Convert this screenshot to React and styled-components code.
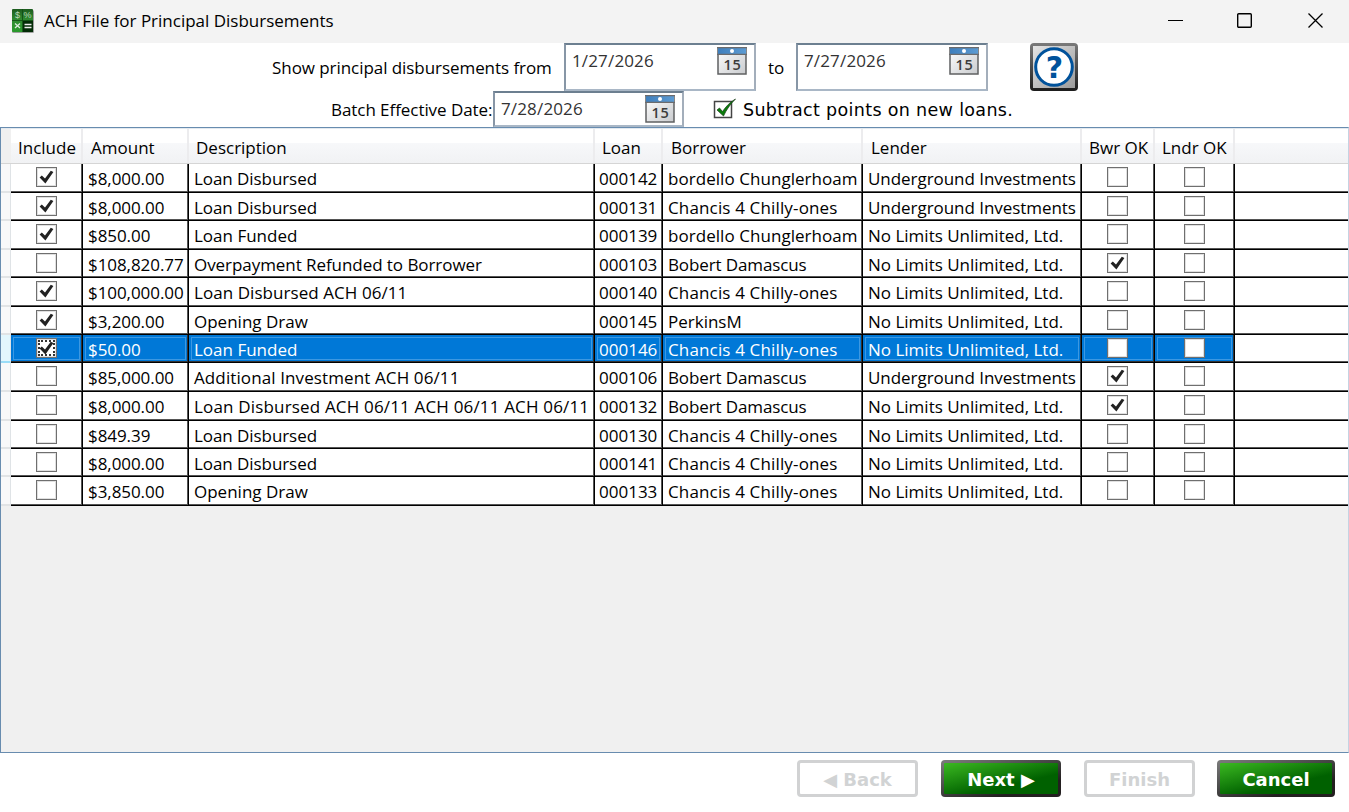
import styled, { createGlobalStyle, css } from "styled-components";

const GlobalStyle = createGlobalStyle`
  * {
    box-sizing: border-box;
  }
  body {
    margin: 0;
    background: #fff;
    color: #000;
    font-family: "Open Sans", "Noto Sans", sans-serif;
    font-size: 17px;
    overflow: hidden;
  }
  button {
    padding: 0;
  }
`;

const Window = styled.div`
  display: flex;
  flex-direction: column;
  width: 1349px;
  height: 812px;
  background: #fff;
`;

// title bar
const TitleBar = styled.header`
  display: flex;
  align-items: center;
  height: 43px;
  flex: none;
  padding: 0 25px 2px 11px;
  background: #f3f3f3;
`;

const Title = styled.h1`
  margin: 0 auto 0 10px;
  font-size: 17px;
  font-weight: 400;
  letter-spacing: -0.01px;
`;

const WindowButton = styled.button`
  display: flex;
  border: 0;
  background: none;
  margin-left: ${(props) => props.$gap || 0}px;
`;

// filters
const FilterRow = styled.div`
  display: flex;
  flex: none;
  height: ${(props) => props.$height}px;
  padding-left: ${(props) => props.$indent}px;
`;

const Label = styled.span`
  width: ${(props) => props.$width}px;
  padding-top: ${(props) => props.$top}px;
  padding-left: ${(props) => props.$left || 0}px;
  line-height: 24px;
  white-space: nowrap;
  letter-spacing: -0.06px;
`;

const DateBox = styled.div`
  display: flex;
  justify-content: space-between;
  width: ${(props) => props.$width}px;
  height: ${(props) => props.$height}px;
  padding: 2px 7px 0 6px;
  border: 2px solid;
  border-color: #6c7f90 #a3aebb #a9b7c6 #8796a6;
  background: #fff;
  color: #333;
  line-height: 27px;
  letter-spacing: 0.15px;
`;

const HelpButton = styled.button`
  display: flex;
  width: 48px;
  height: 48px;
  margin-left: 42px;
  border: 0;
  background: none;
`;

const PointsLabel = styled.span`
  margin-left: 6px;
  padding-top: 7px;
  font-family: "DejaVu Sans", sans-serif;
  font-size: 17.5px;
  line-height: 24px;
  letter-spacing: 0.33px;
`;

// grid
const GridArea = styled.main`
  flex: none;
  height: 626px;
  border: 1px solid #688caf;
  border-right-color: #c5d3e2;
  background: #f0f0f0;
`;

const columns = css`
  display: grid;
  grid-template-columns: 10px 72px 106px 406px 68px 200px 219px 73px 80px 1fr;
`;

const HeaderRow = styled.div`
  ${columns}
  height: 36px;
  border-top: 1px solid #e3e9ef;
  border-bottom: 1px solid #d5d5d5;
  background: linear-gradient(#fff 0 40%, #f7f8fa 41%, #f1f2f4);
`;

const HeaderCell = styled.div`
  padding: 7px 0 0 ${(props) => props.$pad || 7}px;
  border-right: 2px solid #ececee;
  line-height: 24px;
  white-space: nowrap;

  &:last-child {
    border-right: 0;
  }
`;

const HeaderCorner = styled.div`
  background: #f0f0f0;
`;

const Row = styled.div`
  ${columns}
  height: ${(props) => props.$height}px;
`;

const RowHeader = styled.div`
  border-right: 1px solid #dfe3e6;
  border-bottom: 2px solid ${(props) => (props.$selected ? "#9adcf7" : "#e1e3e5")};
  background: ${(props) => (props.$selected ? "#e3f6fd" : "#f8f8f9")};
`;

const Cell = styled.div`
  display: flex;
  align-items: center;
  justify-content: ${(props) => (props.$center ? "center" : "flex-start")};
  padding: 2px 1px 1px ${(props) => (props.$center ? 0 : props.$pad || 5)}px;
  border-right: 1px solid #000;
  border-bottom: 1px solid #000;
  background: #fff;
  box-shadow: inset -1px -1px #555;
  white-space: nowrap;
  letter-spacing: ${(props) => props.$spacing || 0}px;

  &:last-child {
    border-right: 0;
    box-shadow: inset 0 -1px #555;
  }

  ${(props) =>
    props.$selected &&
    css`
      background: #0078d7;
      color: #fff;
      box-shadow: inset -1px -1px #333, inset 0 0 0 2px #0078d7, inset 0 0 0 3px #3c98e2;
    `}
`;

const Check = styled.span`
  display: flex;
  align-self: flex-start;
  width: 21px;
  height: 20px;
  margin-top: 1px;
  border: 1px solid #6f6f6f;
  background: #fff;
  box-shadow: inset 0 0 0 1px #e0e0e0;
  ${(props) => props.$focused && "outline: 2px dotted #333; outline-offset: -4px;"}
`;

// footer
const Footer = styled.footer`
  display: flex;
  justify-content: flex-end;
  gap: 23px;
  padding: 7px 14px 0 0;
`;

const FooterButton = styled.button`
  width: ${(props) => props.$width}px;
  height: 37px;
  padding-top: 1px;
  border: 3px solid #d1d2d3;
  border-radius: 4px;
  background: #fff;
  color: #d1d3d4;
  font: bold 18px "DejaVu Sans", sans-serif;

  &:last-child {
    margin-left: -1px;
  }

  ${(props) =>
    props.$active &&
    css`
      border-color: transparent;
      color: #fff;
      background:
        linear-gradient(167deg, #3bb821, #006100 65%) padding-box,
        linear-gradient(165deg, #777 5%, #4b4b4b 40%, #231f20 75%) border-box;
    `}
`;

const AppIcon = () => (
  <svg width="23" height="24" viewBox="0 0 23 24">
    <defs>
      <linearGradient id="app" x1="0" y1="0" x2="0" y2="1">
        <stop offset="0" stopColor="#1c5a1e" />
        <stop offset=".45" stopColor="#2f8a30" />
        <stop offset="1" stopColor="#2a9a2c" />
      </linearGradient>
    </defs>
    <rect x="1" y="1" width="22" height="23" rx="1.5" fill="#a0a0a0" />
    <rect x="1" y="0" width="21" height="23" rx="1" fill="url(#app)" />
    <rect x="12" y="12" width="10" height="11" fill="#032c06" />
    <path d="M11.500 0v23M1 11.500h21" stroke="#0f4a12" strokeWidth=".8" />
    <g fill="#b9d6b9" fontFamily="Liberation Sans, sans-serif" fontSize="9" textAnchor="middle">
      <text x="6.500" y="9">$</text>
      <text x="16.500" y="9">%</text>
    </g>
    <path d="M4 14.500l5 4.500M9 14.500l-5 4.500" stroke="#dcebdc" strokeWidth="1.300" />
    <path d="M13.500 15.500h7M13.500 18.500h7" stroke="#eee" strokeWidth="1.300" />
  </svg>
);

const CalendarIcon = () => (
  <svg width="30" height="28" viewBox="0 0 30 28">
    <defs>
      <linearGradient id="calTop" x1="0" y1="0" x2="1" y2="0">
        <stop offset="0" stopColor="#3f7fbd" />
        <stop offset="1" stopColor="#5c9bd3" />
      </linearGradient>
      <linearGradient id="calPage" x1="0" y1="0" x2="1" y2="1">
        <stop offset="0" stopColor="#fff" />
        <stop offset="1" stopColor="#c9cbce" />
      </linearGradient>
    </defs>
    <rect x="1" y="1" width="28" height="26" fill="url(#calPage)" stroke="#5f6062" strokeWidth="1.500" />
    <rect x="1" y="0" width="28" height="7" fill="url(#calTop)" />
    <path d="M0 .7h30M0 7.300h30" stroke="#6b6b6d" strokeWidth="1.300" />
    <circle cx="15" cy="4" r="2" fill="#fff" />
    <text
      x="15.500"
      y="22.500"
      textAnchor="middle"
      fontFamily="Open Sans, sans-serif"
      fontSize="14.500"
      fontWeight="600"
      letterSpacing=".8"
      fill="#3c3c3c"
    >
      15
    </text>
  </svg>
);

const HelpIcon = () => (
  <svg width="48" height="48" viewBox="0 0 48 48">
    <defs>
      <linearGradient id="helpEdge" x1="0" y1="0" x2="0" y2="1">
        <stop offset="0" stopColor="#7a7a7a" />
        <stop offset="1" stopColor="#1c1c1c" />
      </linearGradient>
      <linearGradient id="helpFace" x1="0" y1="0" x2="1" y2="1">
        <stop offset="0" stopColor="#e4e4e4" />
        <stop offset="1" stopColor="#9b9b9b" />
      </linearGradient>
    </defs>
    <rect width="48" height="48" rx="4" fill="url(#helpEdge)" />
    <rect x="3" y="3" width="42" height="42" fill="url(#helpFace)" />
    <circle cx="24" cy="24" r="18.300" fill="#fff" stroke="#00529b" strokeWidth="3" />
    <text x="24.500" y="34.500" textAnchor="middle" fontFamily="DejaVu Sans, sans-serif" fontWeight="700" fontSize="30" fill="#00529b">
      ?
    </text>
  </svg>
);

const PointsCheckbox = () => (
  <svg width="24" height="22" viewBox="0 0 24 22">
    <rect x="1.500" y="3.500" width="17" height="16" fill="#fff" stroke="#444" strokeWidth="1.500" />
    <path d="M4 12l2.500-2 3 3.500C13 8.500 17 4 22.500 1 17.500 6 13.500 11.500 10.500 18z" fill="#0a7d0a" stroke="#1c3c1c" strokeWidth=".7" />
  </svg>
);

const CheckBox = ({ checked, focused }) => (
  <Check $focused={focused}>
    {checked && (
      <svg width="19" height="18" viewBox="0 0 19 18">
        <path d="M2.600 9.400l2.200-2 3.200 3.200 5.800-7.800 2.600 1.200L8.400 15.500z" fill="#222" />
      </svg>
    )}
  </Check>
);

const DateField = ({ value, width = 192, height }) => (
  <DateBox $width={width} $height={height}>
    <span>{value}</span>
    <CalendarIcon />
  </DateBox>
);

const bordello = "bordello Chunglerhoam";
const chancis = "Chancis 4 Chilly-ones";
const bobert = "Bobert Damascus";
const underground = "Underground Investments";
const noLimits = "No Limits Unlimited, Ltd.";

// include, amount, description, loan, borrower, lender, bwr ok, row height
const rows = [
  [true, "$8,000.00", "Loan Disbursed", "000142", bordello, underground, false, 29],
  [true, "$8,000.00", "Loan Disbursed", "000131", chancis, underground, false, 28],
  [true, "$850.00", "Loan Funded", "000139", bordello, noLimits, false, 29],
  [false, "$108,820.77", "Overpayment Refunded to Borrower", "000103", bobert, noLimits, true, 28],
  [true, "$100,000.00", "Loan Disbursed ACH 06/11", "000140", chancis, noLimits, false, 29],
  [true, "$3,200.00", "Opening Draw", "000145", "PerkinsM", noLimits, false, 28],
  [true, "$50.00", "Loan Funded", "000146", chancis, noLimits, false, 28],
  [false, "$85,000.00", "Additional Investment ACH 06/11", "000106", bobert, underground, true, 29],
  [false, "$8,000.00", "Loan Disbursed ACH 06/11 ACH 06/11 ACH 06/11", "000132", bobert, noLimits, true, 29],
  [false, "$849.39", "Loan Disbursed", "000130", chancis, noLimits, false, 28],
  [false, "$8,000.00", "Loan Disbursed", "000141", chancis, noLimits, false, 28],
  [false, "$3,850.00", "Opening Draw", "000133", chancis, noLimits, false, 29],
];

// letter spacing for the texts that need it
const spacing = {
  [bordello]: 0.05,
  [chancis]: 0.15,
  [bobert]: -0.12,
  [underground]: -0.05,
  "Loan Disbursed": -0.07,
  "Overpayment Refunded to Borrower": -0.06,
  "Loan Disbursed ACH 06/11": 0.06,
  "Additional Investment ACH 06/11": 0.11,
  "Loan Disbursed ACH 06/11 ACH 06/11 ACH 06/11": 0.17,
};

const selectedLoan = "000146";

function App() {
  return (
    <Window>
      <GlobalStyle />
      <TitleBar>
        <AppIcon />
        <Title>ACH File for Principal Disbursements</Title>
        <WindowButton>
          <svg width="17" height="17">
            <path d="M1 8.500h15" stroke="#000" />
          </svg>
        </WindowButton>
        <WindowButton $gap={52}>
          <svg width="17" height="17">
            <rect x="1.700" y="1.700" width="13.600" height="13.600" rx="1" fill="none" stroke="#000" strokeWidth="1.400" />
          </svg>
        </WindowButton>
        <WindowButton $gap={54}>
          <svg width="17" height="17">
            <path d="M1.500 1.500l14 14M15.500 1.500l-14 14" stroke="#000" strokeWidth="1.300" />
          </svg>
        </WindowButton>
      </TitleBar>

      <FilterRow $height={48} $indent={272}>
        <Label $width={292} $top={13}>Show principal disbursements from</Label>
        <DateField value="1/27/2026" height={48} />
        <Label $width={40} $top={13} $left={12}>to</Label>
        <DateField value="7/27/2026" height={48} />
        <HelpButton>
          <HelpIcon />
        </HelpButton>
      </FilterRow>
      <FilterRow $height={36} $indent={331}>
        <Label $width={162} $top={7}>Batch Effective Date:</Label>
        <DateField value="7/28/2026" width={191} height={36} />
        <Label $width={29} />
        <Label $top={7}>
          <PointsCheckbox />
        </Label>
        <PointsLabel>Subtract points on new loans.</PointsLabel>
      </FilterRow>

      <GridArea>
        <HeaderRow>
          <HeaderCorner />
          <HeaderCell>Include</HeaderCell>
          <HeaderCell $pad={8}>Amount</HeaderCell>
          <HeaderCell>Description</HeaderCell>
          <HeaderCell>Loan</HeaderCell>
          <HeaderCell $pad={8}>Borrower</HeaderCell>
          <HeaderCell $pad={8}>Lender</HeaderCell>
          <HeaderCell>Bwr OK</HeaderCell>
          <HeaderCell>Lndr OK</HeaderCell>
          <HeaderCell />
        </HeaderRow>
        {rows.map(([include, amount, description, loan, borrower, lender, bwrOk, height]) => {
          const selected = loan === selectedLoan;
          return (
            <Row key={loan} $height={height}>
              <RowHeader $selected={selected} />
              <Cell $center $selected={selected}>
                <CheckBox checked={include} focused={selected} />
              </Cell>
              <Cell $selected={selected} $spacing={-0.07}>{amount}</Cell>
              <Cell $selected={selected} $spacing={spacing[description]}>{description}</Cell>
              <Cell $selected={selected} $pad={4}>{loan}</Cell>
              <Cell $selected={selected} $spacing={spacing[borrower]}>{borrower}</Cell>
              <Cell $selected={selected} $spacing={spacing[lender]}>{lender}</Cell>
              <Cell $center $selected={selected}>
                <CheckBox checked={bwrOk} />
              </Cell>
              <Cell $center $selected={selected}>
                <CheckBox />
              </Cell>
              <Cell />
            </Row>
          );
        })}
      </GridArea>

      <Footer>
        <FooterButton $width={121}>◀ Back</FooterButton>
        <FooterButton $width={120} $active>Next ▶</FooterButton>
        <FooterButton $width={111}>Finish</FooterButton>
        <FooterButton $width={118} $active>Cancel</FooterButton>
      </Footer>
    </Window>
  );
}

export default App;
